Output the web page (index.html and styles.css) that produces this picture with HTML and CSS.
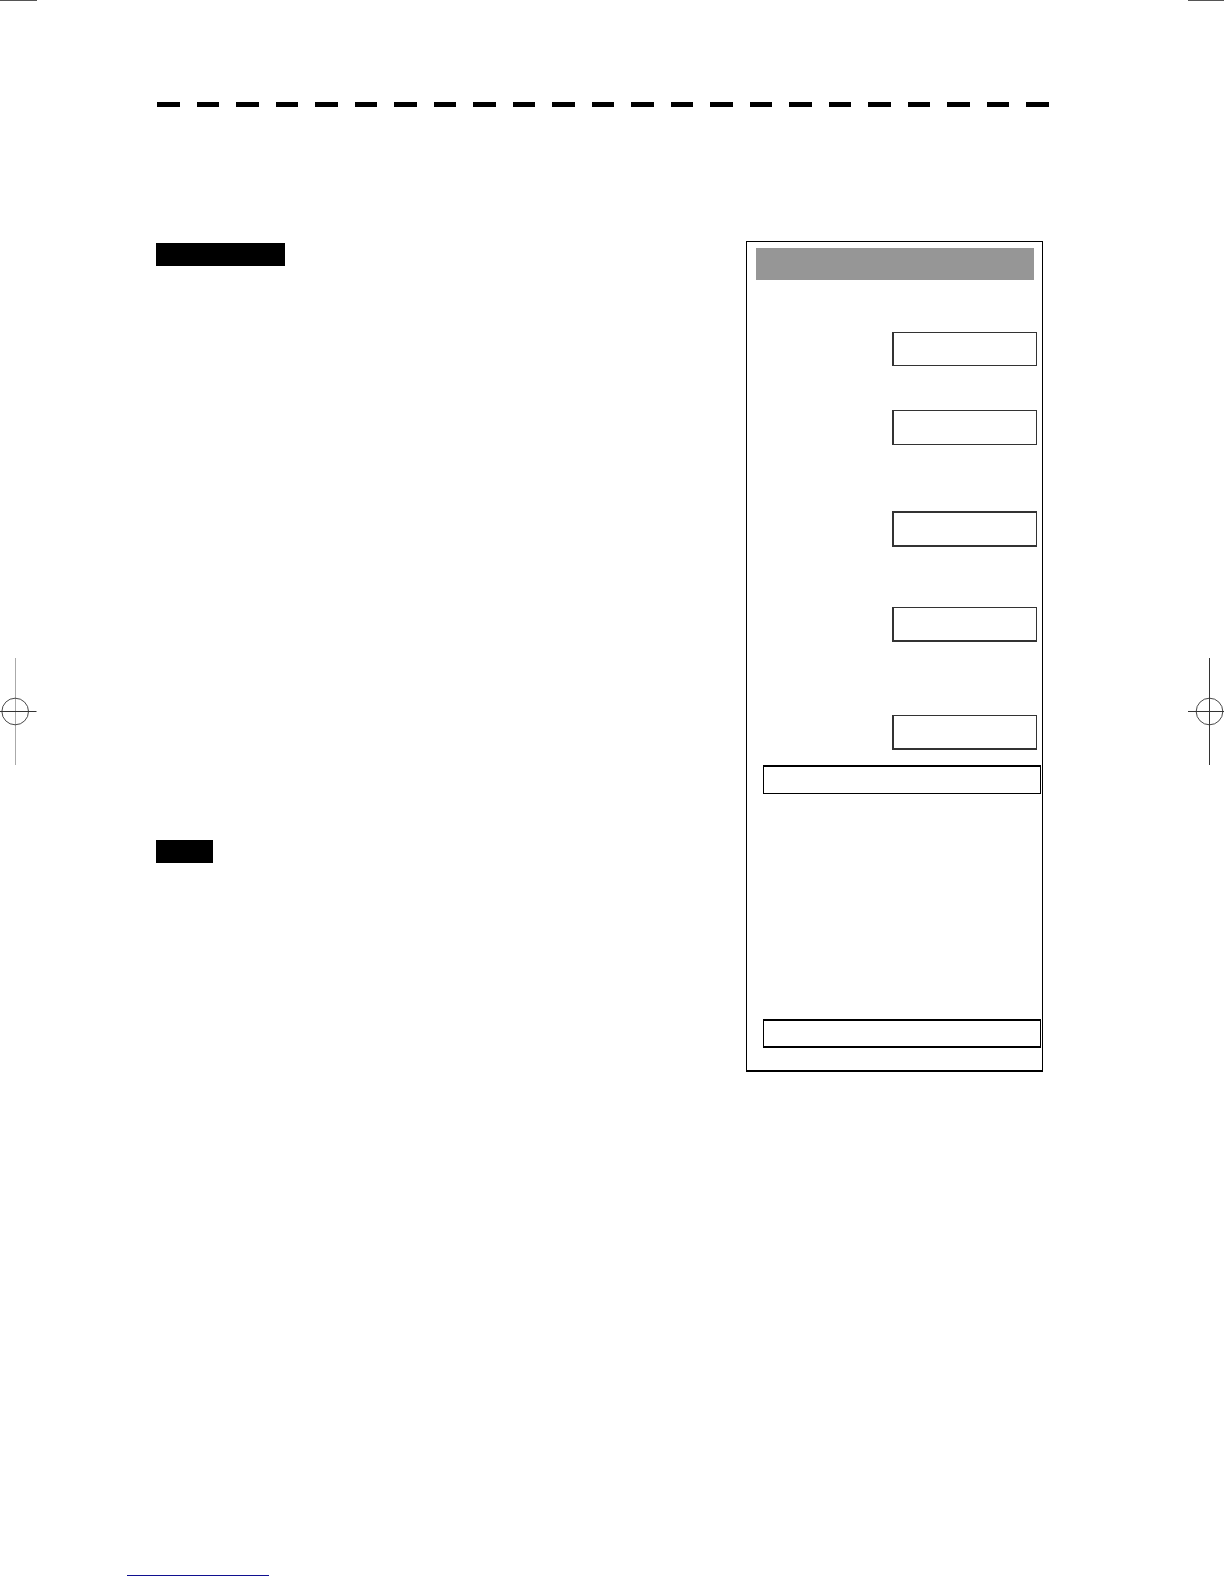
FILE: index.html
```html
<!DOCTYPE html>
<html lang="en">
<head>
<meta charset="utf-8">
<title>Menu sheet</title>
<link rel="stylesheet" href="styles.css">
</head>
<body>
<div class="sheet">
  <aside class="edge edge-left">
    <div class="trim"></div>
    <svg class="register" width="37" height="107" viewBox="0 0 37 107" fill="none" stroke="#333" aria-hidden="true">
      <path d="M15.500 0V107" stroke="#aaa"/>
      <path d="M0 53.500H36.500"/>
      <circle cx="15.200" cy="53.500" r="13.300" stroke-width="0.900"/>
    </svg>
  </aside>
  <div class="page">
    <div class="dashes"></div>
    <main class="content">
      <div class="labels">
        <div class="label"></div>
        <div class="label label-short"></div>
      </div>
      <section class="panel">
        <div class="panel-title"></div>
        <div class="field first"></div>
        <div class="field second"></div>
        <div class="field third"></div>
        <div class="field fourth"></div>
        <div class="field fifth"></div>
        <div class="bar"></div>
        <div class="bar bar-last"></div>
      </section>
    </main>
    <footer class="footer"><a class="footer-link" href="#" aria-label="Home"></a></footer>
  </div>
  <aside class="edge">
    <div class="trim"></div>
    <svg class="register" width="36" height="107" viewBox="0 0 36 107" fill="none" stroke="#333" aria-hidden="true">
      <path d="M21.500 0V107M0 53.500H36"/>
      <circle cx="21.500" cy="53.500" r="13.300" stroke-width="0.900"/>
    </svg>
  </aside>
</div>
</body>
</html>
```
FILE: styles.css
```css
* {
  box-sizing: border-box;
}

body {
  margin: 0;
  background: #fff;
  font-family: "Liberation Sans", sans-serif;
}

.sheet {
  display: flex;
}

.edge {
  flex: none;
  width: 36px;
}

.edge-left {
  width: 37px;
}

.trim {
  height: 1px;
  background: #555;
}

.register {
  display: block;
  margin-top: 657px;
}

.page {
  flex: 1;
  padding: 102px 139px 8px 119px;
}

.dashes {
  height: 5px;
  margin-left: 1px;
  background: repeating-linear-gradient(90deg, #000 0 23px, #fff 23px 40px, #000 40px 62px, #fff 62px 79px);
}

.content {
  display: flex;
  justify-content: space-between;
  margin-top: 134px;
  padding-right: 6px;
}

.labels {
  display: flex;
  flex-direction: column;
  gap: 574px;
  padding-top: 2px;
}

.label {
  width: 129px;
  height: 23px;
  background: #000;
}

.label-short {
  width: 57px;
}

.panel {
  display: flex;
  flex-direction: column;
  width: 297px;
  padding: 6px 0 22px;
  border: 1px solid #000;
  border-bottom-width: 2px;
}

.panel-title {
  height: 32px;
  margin: 0 8px 0 9px;
  background: #969696;
}

.field {
  align-self: flex-end;
  width: 145px;
  height: 35px;
  margin-right: 5px;
  border: 1px solid #333;
  border-left-width: 2px;
}

.first {
  height: 34px;
  margin-top: 52px;
}

.second {
  margin-top: 44px;
}

.third {
  height: 36px;
  margin-top: 66px;
  border-top-width: 2px;
  border-bottom-width: 2px;
}

.fourth {
  margin-top: 60px;
  border-bottom-width: 2px;
}

.fifth {
  margin-top: 73px;
  border-bottom-width: 2px;
}

.bar {
  height: 29px;
  margin: 15px 1px 0 16px;
  border: 1px solid #000;
  border-top-width: 2px;
}

.bar-last {
  margin-top: 225px;
  border-bottom-width: 2px;
}

.footer {
  margin: 484px 0 0 -29px;
}

.footer-link {
  display: block;
  width: 142px;
  height: 20px;
  border-bottom: 1px solid #101090;
}
```
